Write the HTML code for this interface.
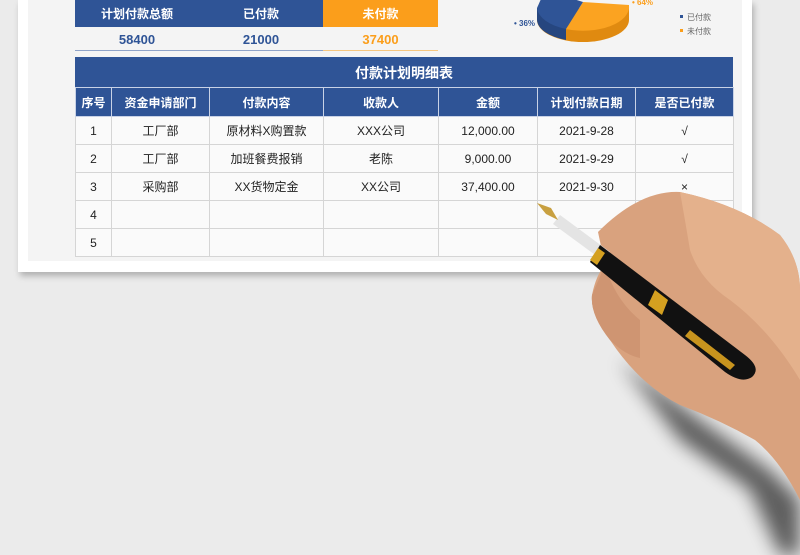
<!DOCTYPE html>
<html><head><meta charset="utf-8"><style>
*{margin:0;padding:0;box-sizing:border-box}
body{width:800px;height:555px;overflow:hidden;background:#ebebeb;position:relative;font-family:"Liberation Sans","Noto Sans CJK SC",sans-serif}
.paper{position:absolute;left:18px;top:0;width:734px;height:272px;background:#fff;box-shadow:2px 4px 6px rgba(0,0,0,.25)}
.inner{position:absolute;left:28px;top:0;width:714px;height:261px;background:#f4f4f4}
.abs{position:absolute}
.c{position:absolute;display:flex;align-items:center;justify-content:center;font-size:12px}
table{position:absolute;left:75px;top:87px;border-collapse:collapse;font-size:12px;color:#222;background:#fafafa}
td,th{border:1px solid #d5d5d5;text-align:center;height:28px;padding:0}
th{background:#2f5496;color:#fff;font-weight:bold;border-color:#c8d2e6;height:29px}
</style></head><body>
<div class="paper"></div>
<div class="inner"></div>
<div class="abs" style="left:75px;top:0;width:248px;height:27px;background:#2f5496"></div>
<div class="abs" style="left:323px;top:0;width:115px;height:27px;background:#fb9e1b"></div>
<div class="c" style="left:75px;top:0;width:124px;height:27px;color:#fff;font-weight:bold">计划付款总额</div>
<div class="c" style="left:199px;top:0;width:124px;height:27px;color:#fff;font-weight:bold">已付款</div>
<div class="c" style="left:323px;top:0;width:115px;height:27px;color:#fff;font-weight:bold">未付款</div>
<div class="c" style="left:75px;top:28px;width:124px;height:22px;color:#2f5496;font-weight:bold;font-size:13px">58400</div>
<div class="c" style="left:199px;top:28px;width:124px;height:22px;color:#2f5496;font-weight:bold;font-size:13px">21000</div>
<div class="c" style="left:323px;top:28px;width:115px;height:22px;color:#fb9e1b;font-weight:bold;font-size:13px">37400</div>
<div class="abs" style="left:75px;top:50px;width:248px;height:1px;background:#8fa3c8"></div>
<div class="abs" style="left:323px;top:50px;width:115px;height:1px;background:#f6c780"></div>
<svg class="abs" style="left:0;top:0" width="800" height="60">
<path d="M537 8 L537 20 A46 22 0 0 0 629 20 L629 8 Z" fill="#e08a10"/>
<path d="M537 8 L537 20 A46 22 0 0 0 566 40 L566 28 Z" fill="#26467f"/>
<path d="M629 5 A46 24 0 0 1 566 29 L583 2 Z" fill="#fba321"/>
<path d="M566 29 A46 24 0 0 1 537 8 L545 -10 L583 2 Z" fill="#2f5496"/>
<text x="514" y="26" font-size="8" fill="#2f5496" font-family="Liberation Sans" font-weight="bold">•  36%</text>
<text x="632" y="5" font-size="8" fill="#fb9e1b" font-family="Liberation Sans" font-weight="bold">•  64%</text>
<rect x="680" y="15" width="3" height="3" fill="#2f5496"/><text x="687" y="20" font-size="8" fill="#666" font-family="Noto Sans CJK SC">已付款</text>
<rect x="680" y="29" width="3" height="3" fill="#fb9e1b"/><text x="687" y="34" font-size="8" fill="#666" font-family="Noto Sans CJK SC">未付款</text>
</svg>
<div class="abs" style="left:75px;top:57px;width:658px;height:31px;background:#2f5496;color:#fff;font-weight:bold;font-size:14px;display:flex;align-items:center;justify-content:center">付款计划明细表</div>
<table>
<colgroup><col style="width:36px"><col style="width:98px"><col style="width:114px"><col style="width:115px"><col style="width:99px"><col style="width:98px"><col style="width:98px"></colgroup>
<tr><th>序号</th><th>资金申请部门</th><th>付款内容</th><th>收款人</th><th>金额</th><th>计划付款日期</th><th>是否已付款</th></tr>
<tr><td>1</td><td>工厂部</td><td>原材料X购置款</td><td>XXX公司</td><td>12,000.00</td><td>2021-9-28</td><td>√</td></tr>
<tr><td>2</td><td>工厂部</td><td>加班餐费报销</td><td>老陈</td><td>9,000.00</td><td>2021-9-29</td><td>√</td></tr>
<tr><td>3</td><td>采购部</td><td>XX货物定金</td><td>XX公司</td><td>37,400.00</td><td>2021-9-30</td><td>×</td></tr>
<tr><td>4</td><td></td><td></td><td></td><td></td><td></td><td></td></tr>
<tr><td>5</td><td></td><td></td><td></td><td></td><td></td><td></td></tr>
</table>
<div class="abs" style="left:28px;top:261px;width:714px;height:11px;background:#fff"></div>
<svg class="abs" style="left:0;top:0" width="800" height="555">
<defs><filter id="b"><feGaussianBlur stdDeviation="9"/></filter></defs>
<path d="M620 360 L700 420 L770 470 L800 500 L800 555 L780 555 L750 490 L680 440 Z" fill="#000" opacity=".6" filter="url(#b)"/>
<path d="M598 232 Q640 190 680 192 Q740 205 780 235 Q800 260 800 290 L800 500 Q780 460 755 440 Q720 420 680 405 Q640 385 610 340 Q590 315 592 295 Q596 275 605 265 Z" fill="#d9a27e"/>
<path d="M680 192 Q740 205 780 235 Q800 260 800 290 L800 380 Q770 330 730 300 Q700 280 690 250 Q685 220 680 192 Z" fill="#e4b18c"/>
<path d="M592 295 Q590 315 610 340 Q625 355 640 358 L640 320 Q615 300 605 265 Z" fill="#cf9572"/>
<path d="M560 215 L610 252 L602 260 L553 224 Z" fill="#e4e4e4"/>
<path d="M537 203 L551 208 L558 220 L546 214 Z" fill="#c8a040"/>
<path d="M600 245 L745 355 Q762 368 752 377 Q742 384 725 372 L590 262 Z" fill="#111"/>
<path d="M655 290 L668 300 L662 315 L648 305 Z" fill="#d4a020"/>
<path d="M690 330 L735 365 L730 370 L685 336 Z" fill="#c8941e"/>
<path d="M598 248 L605 253 L597 265 L590 260 Z" fill="#d4a020"/>
</svg>
</body></html>
